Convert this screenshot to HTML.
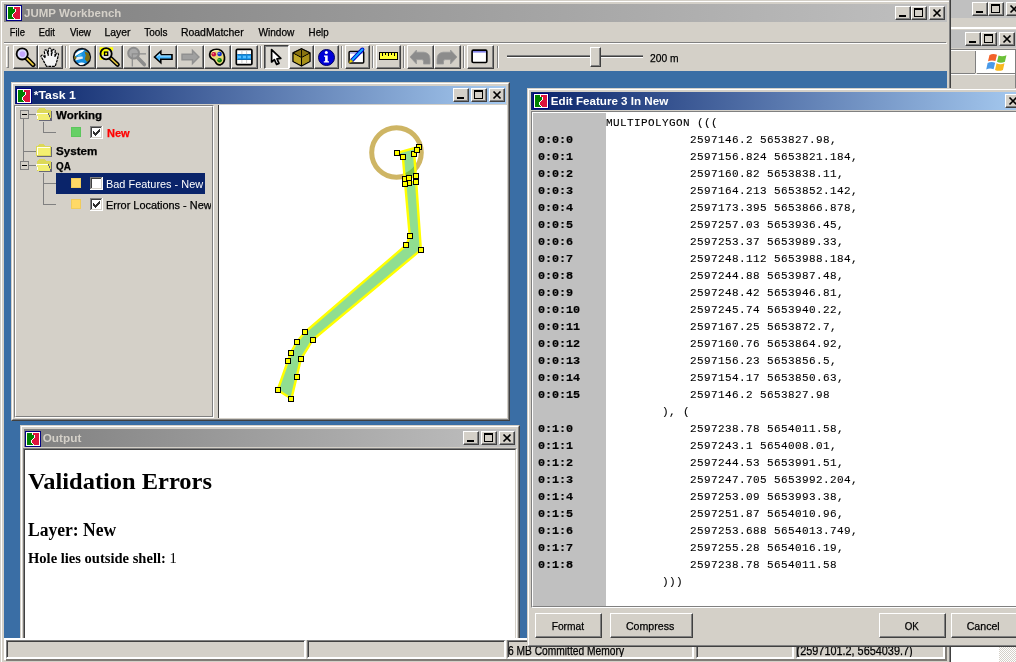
<!DOCTYPE html>
<html>
<head>
<meta charset="utf-8">
<title>JUMP Workbench</title>
<style>
*{box-sizing:border-box;margin:0;padding:0}
html,body{width:1016px;height:662px;overflow:hidden;background:#d4d0c8}
body{position:relative;font-family:"Liberation Sans",sans-serif;font-size:11px;color:#000}
.abs{position:absolute}
.face{background:#d4d0c8}
/* window frames */
.win{position:absolute;background:#d4d0c8;border:1px solid;border-color:#d4d0c8 #404040 #404040 #d4d0c8}
.win>.in{position:absolute;left:0;top:0;right:0;bottom:0;border:1px solid;border-color:#fff #808080 #808080 #fff}
.tb{position:absolute;height:18px;color:#fff;font-weight:bold;font-size:11px;line-height:18px;white-space:nowrap;overflow:hidden}
.tb.act{background:linear-gradient(90deg,#0a246a 0%,#a6caf0 100%)}
.tb.ina{background:linear-gradient(90deg,#808080 0%,#c0c0c0 100%);color:#d4d0c8}
.cb{position:absolute;width:16px;height:14px;background:#d4d0c8;border:1px solid;border-color:#fff #404040 #404040 #fff;box-shadow:inset -1px -1px 0 #808080}
.cb svg{position:absolute;left:0;top:0}
.ico{position:absolute;width:16px;height:16px}
/* toolbar */
.tbtn{position:absolute;top:45px;height:24px;background:#d4d0c8;border:1px solid;border-color:#fff #404040 #404040 #fff;box-shadow:inset -1px -1px 0 #808080}
.tbtn.dn{border-color:#404040 #fff #fff #404040;box-shadow:inset 1px 1px 0 #808080;background:#dcd9d2}
.tsep{position:absolute;top:46px;width:2px;height:22px;border-left:1px solid #808080;border-right:1px solid #fff}
.tbtn svg{position:absolute;left:0;top:0}
.menu span{position:absolute;top:25px;font-size:11px;line-height:14px;white-space:nowrap}
.btn{position:absolute;height:27px;background:#d4d0c8;border:1px solid;border-color:#fff #404040 #404040 #fff;box-shadow:inset -1px -1px 0 #808080;text-align:center;font-size:11px;line-height:24px}
.mono{font-family:"Liberation Mono",monospace}
.serif{font-family:"Liberation Serif",serif}
.sunk{border:1px solid;border-color:#808080 #fff #fff #808080}
.sc{top:640px;height:19px;background:#d4d0c8;border:1px solid;border-width:1px 2px 2px 1px;border-color:#808080 #fff #fff #808080;box-shadow:inset 1px 1px 0 #404040;font-size:12px;line-height:17px;white-space:nowrap;overflow:hidden}
.btn{height:25px;line-height:22px}
.tl{font-size:11px;line-height:15px;white-space:nowrap}
#tr5 span,#tr6 span{display:inline-block;transform-origin:0 0;transform:scaleX(.993)}
.menu span,.tl,.btn,.sc,#t_200{-webkit-text-stroke:0.25px currentColor}
#tr5{-webkit-text-stroke:0}
/*CAL*/
#t_main{display:inline-block;transform-origin:0 0;transform:translate(-0.90px,0.00px) scaleX(1.0441)}
#t_task{display:inline-block;transform-origin:0 0;transform:translate(0.70px,0.00px) scaleX(1.1184)}
#t_out{display:inline-block;transform-origin:0 0;transform:translate(-0.30px,0.00px) scaleX(1.0722)}
#t_dlg{display:inline-block;transform-origin:0 0;transform:translate(-0.20px,0.00px) scaleX(1.0554)}
#m_file{display:inline-block;transform-origin:0 0;transform:translate(-0.30px,0.00px) scaleX(0.8556)}
#m_edit{display:inline-block;transform-origin:0 0;transform:translate(-0.20px,0.00px) scaleX(0.8450)}
#m_view{display:inline-block;transform-origin:0 0;transform:translate(-0.10px,0.00px) scaleX(0.8875)}
#m_layer{display:inline-block;transform-origin:0 0;transform:translate(0.60px,0.00px) scaleX(0.9393)}
#m_tools{display:inline-block;transform-origin:0 0;transform:translate(0.20px,0.00px) scaleX(0.9077)}
#m_road{display:inline-block;transform-origin:0 0;transform:translate(0.90px,0.00px) scaleX(0.9500)}
#m_win{display:inline-block;transform-origin:0 0;transform:translate(0.40px,0.00px) scaleX(0.9200)}
#m_help{display:inline-block;transform-origin:0 0;transform:translate(0.60px,0.00px) scaleX(0.8870)}
#tr1{display:inline-block;transform-origin:0 0;transform:translate(0.10px,0.00px) scaleX(1.0477)}
#tr2{display:inline-block;transform-origin:0 0;transform:translate(-0.10px,0.00px) scaleX(1.0043)}
#tr3{display:inline-block;transform-origin:0 0;transform:translate(0.00px,0.00px) scaleX(1.0564)}
#tr4{display:inline-block;transform-origin:0 0;transform:translate(0.00px,0.00px) scaleX(0.8941)}
#o_h1{display:inline-block;transform-origin:0 0;transform:translate(-0.10px,0.00px) scaleX(1.0183)}
#o_h2{display:inline-block;transform-origin:0 0;transform:translate(0.00px,0.00px) scaleX(0.9747)}
#o_p{display:inline-block;transform-origin:0 0;transform:translate(0.00px,-1.00px) scaleX(1.0034)}
#sp_fmt{display:inline-block;transform-origin:0 0;transform:translate(0.69px,1.00px) scaleX(0.9286)}
#sp_cmp{display:inline-block;transform-origin:0 0;transform:translate(-0.08px,1.00px) scaleX(0.9640)}
#sp_ok{display:inline-block;transform-origin:0 0;transform:translate(-0.35px,1.00px) scaleX(0.8875)}
#sp_can{display:inline-block;transform-origin:0 0;transform:translate(-0.28px,1.00px) scaleX(0.9618)}
#t_200{display:inline-block;transform-origin:0 0;transform:translate(0.00px,1.00px) scaleX(0.9333)}
#s_mem{display:inline-block;transform-origin:0 0;transform:translate(-1.10px,0.00px) scaleX(0.8537)}
#s_xy{display:inline-block;transform-origin:0 0;transform:translate(-1.40px,0.00px) scaleX(0.9055)}
/*ENDCAL*/
</style>
</head>
<body>
<div id="root" style="position:absolute;left:0;top:0;width:1016px;height:662px;will-change:transform">

<!-- ================= MAIN WINDOW ================= -->
<div class="abs" id="main" style="left:0;top:0;width:951px;height:662px;background:#d4d0c8"></div>
<div class="abs" style="left:1px;top:1px;width:948px;height:1px;background:#fff"></div>
<div class="abs" style="left:1px;top:1px;width:1px;height:661px;background:#fff"></div>
<div class="abs" style="left:949px;top:0;width:1px;height:662px;background:#808080"></div>
<div class="abs" style="left:950px;top:0;width:1px;height:662px;background:#404040"></div>

<!-- main title bar -->
<div class="tb ina" style="left:4px;top:4px;width:943px"></div>
<div class="abs" id="t_main" style="left:25px;top:4px;font-weight:bold;font-size:11px;line-height:18px;color:#d4d0c8;white-space:nowrap">JUMP Workbench</div>

<!-- menu -->
<div class="menu" id="menu">
<span style="left:10px" id="m_file">File</span>
<span style="left:39px" id="m_edit">Edit</span>
<span style="left:70px" id="m_view">View</span>
<span style="left:104px" id="m_layer">Layer</span>
<span style="left:144px" id="m_tools">Tools</span>
<span style="left:180px" id="m_road">RoadMatcher</span>
<span style="left:258px" id="m_win">Window</span>
<span style="left:308px" id="m_help">Help</span>
</div>

<!-- toolbar top etched line -->
<div class="abs" style="left:4px;top:42px;width:942px;height:1px;background:#808080"></div>
<div class="abs" style="left:4px;top:43px;width:943px;height:1px;background:#fff"></div>

<!-- toolbar -->
<div class="abs" style="left:6px;top:46px;width:3px;height:22px;border:1px solid;border-color:#fff #808080 #808080 #fff"></div>
<div class="tbtn" style="left:13px;width:25px"><svg width="23" height="22" viewBox="0.3 0.6 23 22">
 <line x1="12.5" y1="12.5" x2="19.5" y2="19.5" stroke="#000" stroke-width="4.6" stroke-linecap="round"/>
 <line x1="13" y1="13" x2="19.3" y2="19.3" stroke="#e8c840" stroke-width="1.8" stroke-linecap="round"/>
 <circle cx="8.5" cy="8.5" r="5.6" fill="#dcdcff" stroke="#000" stroke-width="1.8"/>
 <circle cx="8.7" cy="8.7" r="2.8" fill="#c4a8ff"/>
</svg></div>
<div class="tbtn" style="left:38px;width:25px"><svg width="23" height="22" viewBox="1.2 1 21 20">
 <path d="M8 19.5 L4.5 13 L3 10.5 Q3.2 8.8 5 9.6 L7 12 L6 5.5 Q6.8 3.6 8.4 5 L9.6 9.5 L9.8 3.6 Q11 2 12.4 3.6 L12.6 9.5 L13.6 4.6 Q15 3.2 16 5 L15.8 10.5 L17.2 7.6 Q18.8 6.8 19 8.8 L17.6 14.5 L16 19.5 Z" fill="#f4f4f4" stroke="#000" stroke-width="1.1" stroke-linejoin="round" stroke-dasharray="2.6 0.7"/>
</svg></div>
<div class="tsep" style="left:65px"></div>
<div class="tbtn" style="left:69px;width:27px"><svg width="25" height="22" viewBox="0.500 0 25 22">
 <circle cx="12.500" cy="11" r="8.300" fill="#1890e0" stroke="#0c1018" stroke-width="1.700"/>
 <path d="M6 7.500 Q8.500 4.500 12 4 L15 3.800 Q13.500 6.500 10 7.500 Q7.500 9 5.200 10.500Z" fill="#fff"/>
 <path d="M5.500 12 Q9 10.200 13 10.600 L13.500 12.600 Q9.500 13.800 6 14.400 Z" fill="#e8eef4"/>
 <path d="M8.500 9 L12 8.300 L12 9.300 L9 10Z" fill="#50d8e8"/>
 <path d="M8.500 17.200 Q12 15.600 15.500 17.200 Q13.500 19.400 10.500 19Z" fill="#fff"/>
 <path d="M15 5.500 L19 7 Q21 10.500 20 14 L17.500 16 L15.300 13 L16.300 9.500 Z" fill="#7c6c10"/>
 <path d="M4.800 9.800 L7 11 L6.400 13.800 L4.500 12.600Z" fill="#7c6c10"/>
</svg></div>
<div class="tbtn" style="left:96px;width:27px"><svg width="25" height="22" viewBox="-0.600 0.800 25 22">
 <path d="M2 2 L7.500 2 L2 7.500Z M15.500 2 L10.500 2 L15.500 6Z M2 14.500 L2 9.500 L6 14.500Z" fill="#ffff00"/>
 <line x1="12.5" y1="12.5" x2="20" y2="19.500" stroke="#000" stroke-width="4.400" stroke-linecap="round"/>
 <line x1="13.500" y1="13.500" x2="19.800" y2="19.300" stroke="#e8c840" stroke-width="1.600" stroke-linecap="round"/>
 <circle cx="8.500" cy="8.500" r="5.600" fill="#e4e2dc"/>
 <path d="M3.500 11 A5.600 5.600 0 0 1 12.500 4.400 Z" fill="#ffff00"/>
 <circle cx="8.500" cy="8.500" r="5.600" fill="none" stroke="#000" stroke-width="1.800"/>
 <rect x="6.900" y="6.900" width="3.200" height="3.200" fill="#ffff00" stroke="#000" stroke-width="1.300"/>
</svg></div>
<div class="tbtn" style="left:123px;width:27px"><svg width="25" height="22" viewBox="0 0 25 22">
 <line x1="13.5" y1="11.5" x2="20.3" y2="18.6" stroke="#8c8c8c" stroke-width="3.6" stroke-linecap="round"/>
 <circle cx="9.600" cy="7.200" r="5.400" fill="#a8a8a8" stroke="#8c8c8c" stroke-width="2"/>
 <path d="M8.300 20.500 V7.800 H22" fill="none" stroke="#8c8c8c" stroke-width="1.200"/>
</svg></div>
<div class="tbtn" style="left:150px;width:27px"><svg width="24" height="22" viewBox="0 0 24 22">
 <path d="M3.500 11 L9.800 5.200 V8.800 H21 V13.200 H9.800 V16.800 Z" fill="#48b8ff" stroke="#000" stroke-width="1.6" stroke-linejoin="miter"/>
 <path d="M6 10.500 L9 8 V10 H20" fill="none" stroke="#b0e4ff" stroke-width="1"/>
</svg></div>
<div class="tbtn" style="left:177px;width:27px"><svg width="24" height="22" viewBox="0 0 24 22">
 <path d="M21 11 L14.5 4.5 V8.3 H4 V13.7 H14.5 V17.5 Z" fill="#a0a0a0" stroke="#909090" stroke-width="1.4" stroke-linejoin="miter"/>
</svg></div>
<div class="tbtn" style="left:204px;width:27px"><svg width="24" height="22" viewBox="0 0 24 22">
 <path d="M5.5 5.5 Q9 2.5 14 3.5 Q19 5.5 19.5 11 Q20 17 15.5 18.8 Q12 19.5 10.5 16 Q9.5 13.5 6.5 12.5 Q3.5 10 5.5 5.5Z" fill="#e8d878" stroke="#000" stroke-width="1.7"/>
 <path d="M7 6 Q10 4.2 13.5 4.8" fill="none" stroke="#fff8c0" stroke-width="1"/>
 <circle cx="8.8" cy="8.3" r="2.3" fill="#d01040"/><circle cx="8.2" cy="7.7" r="0.8" fill="#ff90a0"/>
 <circle cx="14.6" cy="8" r="2.3" fill="#1030d0"/><circle cx="14" cy="7.4" r="0.8" fill="#90a0ff"/>
 <circle cx="14.6" cy="14.3" r="2.3" fill="#108010"/><circle cx="14" cy="13.7" r="0.8" fill="#70d070"/>
</svg></div>
<div class="tbtn" style="left:231px;width:27px"><svg width="24" height="22" viewBox="0 0 24 22">
 <rect x="4.300" y="3.400" width="15.600" height="15.200" rx="1.200" fill="#fff" stroke="#000" stroke-width="1.700"/>
 <rect x="5.200" y="8.300" width="13.800" height="5.400" fill="#1e9cf0"/>
 <rect x="5.200" y="8.200" width="13.800" height="0.900" fill="#0868b0"/><rect x="5.200" y="13.100" width="13.800" height="0.900" fill="#0868b0"/>
 <rect x="6" y="10" width="3" height="2" fill="#58c0ff"/><rect x="11" y="10" width="3" height="2" fill="#58c0ff"/><rect x="15.600" y="10" width="3" height="2" fill="#58c0ff"/>
 <path d="M9.900 4.300V8.200M9.900 14V17.800M14.600 4.300V8.200M14.600 14V17.800" stroke="#c4c4c4" stroke-width="0.900"/>
 <path d="M9.900 9V13.200M14.600 9V13.200" stroke="#1480d0" stroke-width="0.900"/>
</svg></div>
<div class="tsep" style="left:260px"></div>
<div class="tbtn dn" style="left:264px;width:25px"><svg width="23" height="22" viewBox="0 0 23 22">
 <path d="M6.6 3.6 V16 L9.4 13.6 L11.6 18.4 L14 17.4 L12 12.8 L15.8 12.4 Z" fill="#fff" stroke="#000" stroke-width="1.7" stroke-linejoin="round"/>
</svg></div>
<div class="tbtn" style="left:289px;width:25px"><svg width="23" height="22" viewBox="0 0 23 22">
 <path d="M11.5 2.8 L20 7 V15.5 L11.5 20 L3 15.5 V7 Z" fill="#b09820" stroke="#000" stroke-width="1.4" stroke-linejoin="round"/>
 <path d="M3 7 L11.5 11.5 L20 7 L11.5 2.8Z" fill="#8a7410" stroke="#000" stroke-width="1"/>
 <path d="M11.5 11.5 V20" stroke="#000" stroke-width="1.2"/>
 <path d="M11.5 3.5 V11" stroke="#000" stroke-width="0.9"/>
 <path d="M3.8 8.2 L10.8 12 V18.8 L3.8 15Z" fill="#c0a828"/>
 <path d="M19.2 8.2 L12.2 12 V18.8 L19.2 15Z" fill="#a89018"/>
</svg></div>
<div class="tbtn" style="left:314px;width:25px"><svg width="23" height="22" viewBox="0 0 23 22">
 <circle cx="11.5" cy="11.5" r="8" fill="#0000d8" stroke="#000060" stroke-width="1"/>
 <circle cx="11.3" cy="6.6" r="1.5" fill="#fff"/>
 <path d="M9 9.4 H12.7 V15.2 H14 V16.6 H8.8 V15.2 H10.1 V10.8 H9Z" fill="#fff"/>
</svg></div>
<div class="tsep" style="left:341px"></div>
<div class="tbtn" style="left:345px;width:25px"><svg width="23" height="22" viewBox="0.600 1.200 23 22">
 <rect x="3.700" y="6.700" width="14.600" height="11.600" rx="1" fill="#fff" stroke="#000" stroke-width="1.500"/>
 <rect x="4.500" y="7.500" width="13" height="1.400" fill="#a0a0ec"/>
 <line x1="6.500" y1="15.500" x2="17" y2="4.700" stroke="#0000c8" stroke-width="4" stroke-linecap="round"/>
 <line x1="7" y1="15" x2="17" y2="4.700" stroke="#10a8ff" stroke-width="2" stroke-linecap="round"/>
 <path d="M3.600 18.200 L5 14.400 L7.800 16.800Z" fill="#f0e000" stroke="#a08000" stroke-width="0.500"/>
</svg></div>
<div class="tsep" style="left:372px"></div>
<div class="tbtn" style="left:376px;width:25px"><svg width="23" height="22" viewBox="0 0 23 22" shape-rendering="crispEdges">
 <rect x="2" y="6" width="19" height="8" rx="1" fill="#000"/>
 <rect x="3" y="7" width="17" height="6" fill="#ffff30"/>
 <rect x="5" y="7" width="1" height="3" fill="#000"/><rect x="8" y="7" width="1" height="2" fill="#000"/><rect x="11" y="7" width="1" height="3" fill="#000"/><rect x="14" y="7" width="1" height="2" fill="#000"/><rect x="17" y="7" width="1" height="3" fill="#000"/>
</svg></div>
<div class="tsep" style="left:403px"></div>
<div class="tbtn" style="left:407px;width:27px"><svg width="25" height="22" viewBox="0 0 25 22">
 <path d="M2 11 L8.500 4 V6.200 H16 Q22 7 22 13 V18 H15.500 V15 Q15.300 13.600 13.500 13.600 H8.500 V18 Z" fill="#8c8c8c" stroke="#999" stroke-width="0.800" stroke-linejoin="round"/>
</svg></div>
<div class="tbtn" style="left:434px;width:27px"><svg width="25" height="22" viewBox="0 0 25 22">
 <path d="M22 11 L15.500 4 V6.200 H8 Q2 7 2 13 V18 H8.500 V15 Q8.700 13.600 10.500 13.600 H15.500 V18 Z" fill="#8c8c8c" stroke="#999" stroke-width="0.800" stroke-linejoin="round"/>
</svg></div>
<div class="tsep" style="left:463px"></div>
<div class="tbtn" style="left:467px;width:27px"><svg width="25" height="22" viewBox="0 0 25 22">
 <rect x="4.100" y="4.200" width="14.700" height="12.300" rx="1.200" fill="#fff" stroke="#000" stroke-width="1.700"/>
 <rect x="5" y="5" width="12.900" height="1.600" fill="#8080e8"/>
</svg></div>
<div class="tsep" style="left:497px"></div>
<!-- slider -->
<div class="abs" style="left:507px;top:56px;width:136px;height:1px;background:#404040"></div>
<div class="abs" style="left:507px;top:55px;width:136px;height:1px;background:#808080"></div>
<div class="abs" style="left:507px;top:57px;width:136px;height:1px;background:#fff"></div>
<div class="abs" style="left:590px;top:47px;width:11px;height:20px;background:#d4d0c8;border:1px solid;border-color:#fff #404040 #404040 #fff;box-shadow:inset -1px -1px 0 #808080"></div>
<div class="abs" id="t_200" style="left:650px;top:50px;font-size:11px;line-height:14px;white-space:nowrap">200 m</div>

<!-- desktop -->
<div class="abs" id="desk" style="left:4px;top:71px;width:943px;height:567px;background:#3a6ea5"></div>


<!-- main title icon + buttons -->
<svg class="abs" style="left:6px;top:5px" width="16" height="16" viewBox="0 0 16 16" shape-rendering="crispEdges"><use href="#jico"/></svg>
<div class="cb" style="left:895px;top:6px"><svg width="14" height="12"><use href="#gmin"/></svg></div>
<div class="cb" style="left:911px;top:6px"><svg width="14" height="12"><use href="#gmax"/></svg></div>
<div class="cb" style="left:929px;top:6px"><svg width="14" height="12"><use href="#gcls"/></svg></div>

<!-- ================= TASK FRAME ================= -->
<div class="win" id="task" style="left:11px;top:82px;width:499px;height:339px"><div class="in"></div></div>
<div class="tb act" style="left:15px;top:86px;width:491px"></div>
<svg class="abs" style="left:16px;top:88px" width="16" height="16" viewBox="0 0 16 16" shape-rendering="crispEdges"><use href="#jico"/></svg>
<div class="abs" id="t_task" style="left:33px;top:86px;font-weight:bold;font-size:11px;line-height:18px;color:#fff;white-space:nowrap">*Task 1</div>
<div class="cb" style="left:453px;top:88px"><svg width="14" height="12"><use href="#gmin"/></svg></div>
<div class="cb" style="left:471px;top:88px"><svg width="14" height="12"><use href="#gmax"/></svg></div>
<div class="cb" style="left:489px;top:88px"><svg width="14" height="12"><use href="#gcls"/></svg></div>

<!-- tree panel -->
<div class="abs" style="left:14px;top:105px;width:200px;height:313px;background:#d4d0c8;border:1px solid;border-color:#808080 #fff #fff #808080"></div>
<div class="abs" style="left:15px;top:106px;width:198px;height:311px;border:1px solid;border-color:#fff #808080 #808080 #fff"></div>
<!-- splitter dark line + map -->
<div class="abs" style="left:218px;top:105px;width:1px;height:313px;background:#404040"></div>
<div class="abs" id="map" style="left:219px;top:105px;width:288px;height:313px;background:#fff"></div>

<!-- tree content -->
<svg class="abs" style="left:16px;top:107px" width="196" height="120" viewBox="16 107 196 120" shape-rendering="crispEdges">
 <g stroke="#808080" stroke-width="1" fill="none">
  <path d="M23.5 119 V161 M29 114.5 H36 M23.5 151.5 H36 M29 165.5 H36"/>
  <path d="M43.5 122 V132.500 H56 M43.5 173 V204.500 H56 M43.5 183.500 H56"/>
  <rect x="20.500" y="110.500" width="8" height="8" fill="#d4d0c8"/>
  <rect x="20.500" y="161.500" width="8" height="8" fill="#d4d0c8"/>
 </g>
 <rect x="22" y="114" width="5" height="1" fill="#000"/>
 <rect x="22" y="165" width="5" height="1" fill="#000"/>
 <rect x="56" y="173" width="149" height="21" fill="#0a246a"/>
 <rect x="71" y="127" width="10" height="10" fill="#66d066"/><rect x="71.500" y="127.500" width="9" height="9" fill="none" stroke="#5cc65c"/>
 <rect x="71" y="178" width="10" height="10" fill="#ffd966"/><rect x="71.500" y="178.500" width="9" height="9" fill="none" stroke="#f0cc5c"/>
 <rect x="71" y="199" width="10" height="10" fill="#ffd966"/><rect x="71.500" y="199.500" width="9" height="9" fill="none" stroke="#f0cc5c"/>
 <use href="#chk" x="90" y="126"/><use href="#tick" x="90" y="126"/>
 <use href="#chk" x="90" y="177"/>
 <use href="#chk" x="90" y="198"/><use href="#tick" x="90" y="198"/>
 <use href="#fopen" x="36" y="108"/>
 <use href="#fclosed" x="36" y="144"/>
 <use href="#fopen" x="36" y="159"/>
</svg>
<div class="abs tl" id="tr1" style="left:56px;top:108px;font-weight:bold">Working</div>
<div class="abs tl" id="tr2" style="left:107px;top:126px;font-weight:bold;color:#ff0000">New</div>
<div class="abs tl" id="tr3" style="left:56px;top:144px;font-weight:bold">System</div>
<div class="abs tl" id="tr4" style="left:56px;top:159px;font-weight:bold">QA</div>
<div class="abs tl" id="tr5" style="left:106.300px;top:177px;color:#fff;width:98px;overflow:hidden"><span>Bad Features - New</span></div>
<div class="abs tl" id="tr6" style="left:106.300px;top:198px;width:105px;overflow:hidden"><span>Error Locations - New</span></div>

<!-- map content -->
<svg class="abs" style="left:219px;top:105px" width="288" height="313" viewBox="0 0 288 313">
 <circle cx="177.500" cy="47.500" r="24.8" fill="none" stroke="#ceb564" stroke-width="5"/>
 <path d="M58.70 285.00 L72.43 293.78 L77.59 271.91 L81.97 253.78 L93.84 234.74 L201.89 144.86 L197.16 76.54 L190.37 78.02 L186.19 78.93 L190.77 131.47 L187.31 139.99 L85.90 227.22 L77.51 237.27 L71.66 248.15 L69.00 255.74Z M178.31 47.79 L183.89 52.40 L185.74 73.72 L189.84 72.82 L196.80 71.30 L195.23 48.59 L197.57 44.99 L199.63 41.83Z" fill="#42c742" fill-opacity="0.588" stroke="none" fill-rule="evenodd"/>
 <path d="M58.70 285.00 L72.43 293.78 L77.59 271.91 L81.97 253.78 L93.84 234.74 L201.89 144.86 L197.16 76.54 L190.37 78.02 L186.19 78.93 L190.77 131.47 L187.31 139.99 L85.90 227.22 L77.51 237.27 L71.66 248.15 L69.00 255.74Z M178.31 47.79 L183.89 52.40 L185.74 73.72 L189.84 72.82 L196.80 71.30 L195.23 48.59 L197.57 44.99 L199.63 41.83Z" fill="none" stroke="#ffff00" stroke-width="2.4" stroke-linejoin="round"/>
 <g fill="#ffff00" stroke="#000" stroke-width="1" shape-rendering="crispEdges"><rect x="56.5" y="282.5" width="5" height="5"/><rect x="69.5" y="291.5" width="5" height="5"/><rect x="75.5" y="269.5" width="5" height="5"/><rect x="79.5" y="251.5" width="5" height="5"/><rect x="91.5" y="232.5" width="5" height="5"/><rect x="199.5" y="142.5" width="5" height="5"/><rect x="194.5" y="74.5" width="5" height="5"/><rect x="187.5" y="75.5" width="5" height="5"/><rect x="183.5" y="76.5" width="5" height="5"/><rect x="188.5" y="128.5" width="5" height="5"/><rect x="184.5" y="137.5" width="5" height="5"/><rect x="83.5" y="224.5" width="5" height="5"/><rect x="75.5" y="234.5" width="5" height="5"/><rect x="69.5" y="245.5" width="5" height="5"/><rect x="66.5" y="253.5" width="5" height="5"/><rect x="175.5" y="45.5" width="5" height="5"/><rect x="181.5" y="49.5" width="5" height="5"/><rect x="183.5" y="71.5" width="5" height="5"/><rect x="187.5" y="70.5" width="5" height="5"/><rect x="194.5" y="68.5" width="5" height="5"/><rect x="192.5" y="46.5" width="5" height="5"/><rect x="197.5" y="39.5" width="5" height="5"/><rect x="195.5" y="42.5" width="5" height="5"/></g>
</svg>

<!-- ================= OUTPUT FRAME ================= -->
<div class="win" id="outw" style="left:20px;top:425px;width:500px;height:230px"><div class="in"></div></div>
<div class="tb ina" style="left:24px;top:429px;width:492px"></div>
<svg class="abs" style="left:25px;top:431px" width="16" height="16" viewBox="0 0 16 16" shape-rendering="crispEdges"><use href="#jico"/></svg>
<div class="abs" id="t_out" style="left:43px;top:429px;font-weight:bold;font-size:11px;line-height:18px;color:#d4d0c8;white-space:nowrap">Output</div>
<div class="cb" style="left:463px;top:431px"><svg width="14" height="12"><use href="#gmin"/></svg></div>
<div class="cb" style="left:481px;top:431px"><svg width="14" height="12"><use href="#gmax"/></svg></div>
<div class="cb" style="left:499px;top:431px"><svg width="14" height="12"><use href="#gcls"/></svg></div>
<div class="abs" style="left:23px;top:448px;width:494px;height:200px;background:#fff;border:1px solid;border-color:#808080 #fff #fff #808080"></div>
<div class="abs" style="left:24px;top:449px;width:492px;height:200px;background:#fff;border:1px solid;border-color:#404040 #d4d0c8 #d4d0c8 #404040"></div>
<div class="abs serif" id="o_h1" style="left:28px;top:467px;font-size:24px;font-weight:bold;line-height:28px;white-space:nowrap">Validation Errors</div>
<div class="abs serif" id="o_h2" style="left:28px;top:519px;font-size:18px;font-weight:bold;line-height:22px;white-space:nowrap">Layer: New</div>
<div class="abs serif" id="o_p" style="left:28px;top:551px;font-size:14.5px;line-height:16px;white-space:nowrap"><b>Hole lies outside shell:</b> 1</div>

<!-- ================= STATUS BAR (below desktop) ================= -->
<div class="abs" style="left:2px;top:638px;width:947px;height:24px;background:#d4d0c8"></div>
<div class="abs" style="left:4px;top:638px;width:943px;height:2px;background:#fff"></div>
<div class="abs" style="left:4px;top:638px;width:2px;height:22px;background:#fff"></div>
<div class="abs" style="left:6px;top:659px;width:941px;height:2px;background:#807c76"></div>
<div class="abs" style="left:945px;top:640px;width:2px;height:21px;background:#807c76"></div>
<div class="abs sc" style="left:6px;width:300px"></div>
<div class="abs sc" style="left:307px;width:199px"></div>
<div class="abs sc" style="left:507px;width:187px"><span id="s_mem" style="position:absolute;left:1px;top:2px">6 MB Committed Memory</span></div>
<div class="abs sc" style="left:696px;width:98px"></div>
<div class="abs sc" style="left:796px;width:149px"><span id="s_xy" style="position:absolute;left:1px;top:2px">(2597101.2, 5654039.7)</span></div>

<!-- ================= RIGHT BACKGROUND WINDOWS ================= -->
<div class="abs" style="left:951px;top:0;width:65px;height:662px;background:#d4d0c8"></div>
<div class="abs" style="left:951px;top:0;width:65px;height:18px;background:#c0c0c0"></div>
<div class="cb" style="left:972px;top:2px"><svg width="14" height="12"><use href="#gmin"/></svg></div>
<div class="cb" style="left:988px;top:2px"><svg width="14" height="12"><use href="#gmax"/></svg></div>
<div class="cb" style="left:1006px;top:2px"><svg width="14" height="12"><use href="#gcls"/></svg></div>
<div class="abs" style="left:951px;top:27px;width:65px;height:2px;background:#fff"></div>
<div class="abs" style="left:951px;top:30px;width:65px;height:18px;background:#c0c0c0"></div>
<div class="cb" style="left:965px;top:32px"><svg width="14" height="12"><use href="#gmin"/></svg></div>
<div class="cb" style="left:981px;top:32px"><svg width="14" height="12"><use href="#gmax"/></svg></div>
<div class="cb" style="left:999px;top:32px"><svg width="14" height="12"><use href="#gcls"/></svg></div>
<div class="abs" style="left:951px;top:49px;width:65px;height:1px;background:#808080"></div>
<div class="abs" style="left:951px;top:50px;width:65px;height:1px;background:#fff"></div>
<div class="abs" style="left:975px;top:51px;width:1px;height:22px;background:#808080"></div>
<div class="abs" style="left:976px;top:50px;width:39px;height:23px;background:#fff"></div>
<div class="abs" style="left:951px;top:73px;width:24px;height:1px;background:#808080"></div>
<div class="abs" style="left:977px;top:73px;width:38px;height:1px;background:#808080"></div>
<div class="abs" style="left:951px;top:74px;width:65px;height:1px;background:#fff"></div>
<div class="abs" style="left:1015px;top:50px;width:1px;height:612px;background:#808080"></div>
<svg class="abs" style="left:986px;top:52px" width="22" height="20" viewBox="0 0 20 18">
 <path d="M3.2 2.6 Q6.5 0.8 10 2.4 L8.6 8.2 Q5.2 6.8 1.8 8.4 Z" fill="#f2622a"/>
 <path d="M11.4 3 Q14.6 4.6 18.6 2.8 L17.2 8.8 Q13.4 10.4 10 8.8 Z" fill="#6cc038"/>
 <path d="M1.5 9.8 Q5 8.2 8.3 9.6 L6.9 15.6 Q3.6 14.2 0.2 15.8 Z" fill="#4a9ae8"/>
 <path d="M9.6 10.2 Q13 11.8 16.8 10.2 L15.4 16.2 Q11.8 17.8 8.2 16.2 Z" fill="#f8b820"/>
</svg>
<!-- bottom-right white area under dialog -->
<div class="abs" style="left:951px;top:647px;width:65px;height:15px;background:#fff"></div>
<div class="abs" style="left:999px;top:647px;width:17px;height:15px;background:repeating-conic-gradient(#fff 0 25%,#d4d0c8 0 50%) 0 0/2px 2px"></div>

<!-- ================= EDIT FEATURE DIALOG ================= -->
<div class="win" id="dlg" style="left:527px;top:88px;width:500px;height:559px"><div class="in"></div></div>
<div class="tb act" style="left:531px;top:92px;width:492px"></div>
<svg class="abs" style="left:533px;top:93px" width="16" height="16" viewBox="0 0 16 16" shape-rendering="crispEdges"><use href="#jico"/></svg>
<div class="abs" id="t_dlg" style="left:551px;top:92px;font-weight:bold;font-size:11px;line-height:18px;color:#fff;white-space:nowrap">Edit Feature 3 In New</div>
<div class="cb" style="left:1005px;top:94px"><svg width="14" height="12"><use href="#gcls"/></svg></div>
<!-- editor panel -->
<div class="abs" style="left:531px;top:111px;width:492px;height:497px;background:#fff;border:1px solid;border-color:#808080 #fff #fff #808080"></div>
<div class="abs" style="left:532px;top:112px;width:490px;height:495px;background:#fff;border:1px solid;border-color:#fff #808080 #808080 #fff"></div>
<div class="abs" style="left:533px;top:113px;width:73px;height:493px;background:#c0c0c0"></div>
<pre class="abs mono" id="gut" style="left:538px;top:115px;font-size:11.75px;line-height:17px;font-weight:bold;letter-spacing:-0.050px;-webkit-text-stroke:0.200px #000">&nbsp;
0:0:0
0:0:1
0:0:2
0:0:3
0:0:4
0:0:5
0:0:6
0:0:7
0:0:8
0:0:9
0:0:10
0:0:11
0:0:12
0:0:13
0:0:14
0:0:15

0:1:0
0:1:1
0:1:2
0:1:3
0:1:4
0:1:5
0:1:6
0:1:7
0:1:8
</pre>
<pre class="abs mono" id="wkt" style="left:606px;top:115px;font-size:11px;line-height:17px;letter-spacing:0.400px;-webkit-text-stroke:0.100px #000">MULTIPOLYGON (((
            2597146.2 5653827.98,
            2597156.824 5653821.184,
            2597160.82 5653838.11,
            2597164.213 5653852.142,
            2597173.395 5653866.878,
            2597257.03 5653936.45,
            2597253.37 5653989.33,
            2597248.112 5653988.184,
            2597244.88 5653987.48,
            2597248.42 5653946.81,
            2597245.74 5653940.22,
            2597167.25 5653872.7,
            2597160.76 5653864.92,
            2597156.23 5653856.5,
            2597154.17 5653850.63,
            2597146.2 5653827.98
        ), (
            2597238.78 5654011.58,
            2597243.1 5654008.01,
            2597244.53 5653991.51,
            2597247.705 5653992.204,
            2597253.09 5653993.38,
            2597251.87 5654010.96,
            2597253.688 5654013.749,
            2597255.28 5654016.19,
            2597238.78 5654011.58
        )))</pre>
<!-- buttons -->
<div class="btn" id="b_fmt" style="left:535px;top:613px;width:67px"><span id="sp_fmt">Format</span></div>
<div class="btn" id="b_cmp" style="left:610px;top:613px;width:83px"><span id="sp_cmp">Compress</span></div>
<div class="btn" id="b_ok" style="left:879px;top:613px;width:67px"><span id="sp_ok">OK</span></div>
<div class="btn" id="b_can" style="left:951px;top:613px;width:67px"><span id="sp_can">Cancel</span></div>

<!-- shared symbols -->
<svg width="0" height="0" style="position:absolute">
<defs>
<g id="jico"><rect x="0" y="0" width="16" height="16" fill="#000080"/><rect x="1" y="1" width="14" height="14" fill="#fff"/><rect x="2" y="2" width="5" height="1" fill="#008000"/><rect x="8" y="2" width="6" height="1" fill="#dc143c"/><rect x="2" y="3" width="5" height="1" fill="#008000"/><rect x="8" y="3" width="6" height="1" fill="#dc143c"/><rect x="2" y="4" width="7" height="1" fill="#008000"/><rect x="10" y="4" width="4" height="1" fill="#dc143c"/><rect x="2" y="5" width="7" height="1" fill="#008000"/><rect x="10" y="5" width="4" height="1" fill="#dc143c"/><rect x="2" y="6" width="7" height="1" fill="#008000"/><rect x="10" y="6" width="4" height="1" fill="#dc143c"/><rect x="2" y="7" width="6" height="1" fill="#008000"/><rect x="9" y="7" width="5" height="1" fill="#dc143c"/><rect x="2" y="8" width="5" height="1" fill="#008000"/><rect x="8" y="8" width="6" height="1" fill="#dc143c"/><rect x="2" y="9" width="4" height="1" fill="#008000"/><rect x="7" y="9" width="7" height="1" fill="#dc143c"/><rect x="2" y="10" width="4" height="1" fill="#008000"/><rect x="7" y="10" width="7" height="1" fill="#dc143c"/><rect x="2" y="11" width="4" height="1" fill="#008000"/><rect x="7" y="11" width="7" height="1" fill="#dc143c"/><rect x="2" y="12" width="5" height="1" fill="#008000"/><rect x="8" y="12" width="6" height="1" fill="#dc143c"/><rect x="2" y="13" width="6" height="1" fill="#008000"/><rect x="9" y="13" width="5" height="1" fill="#dc143c"/></g>
<g id="gmin"><rect x="3" y="8" width="7" height="2" fill="#000"/></g>
<g id="gmax"><path d="M2 1h9v9h-9z M3 3v6h7v-6z" fill="#000" fill-rule="evenodd"/></g>
<g id="gcls"><path d="M3.5 2.5 L10.5 9.5 M10.5 2.5 L3.5 9.5" stroke="#000" stroke-width="1.7" fill="none"/></g>
<g id="chk"><rect x="0" y="0" width="13" height="13" fill="#fff"/><path d="M0 0h12v1h-11v11h-1z" fill="#808080"/><path d="M1 1h10v1h-9v9h-1z" fill="#404040"/><path d="M12 0h1v13h-13v-1h12z" fill="#fff"/><path d="M11 1h1v11h-11v-1h10z" fill="#d4d0c8"/></g>
<g id="tick"><rect x="3" y="5" width="1" height="3" fill="#303030"/><rect x="4" y="6" width="1" height="3" fill="#303030"/><rect x="5" y="7" width="1" height="3" fill="#303030"/><rect x="6" y="6" width="1" height="3" fill="#303030"/><rect x="7" y="5" width="1" height="3" fill="#303030"/><rect x="8" y="4" width="1" height="3" fill="#303030"/><rect x="9" y="3" width="1" height="3" fill="#303030"/></g>
<g id="fopen"><path d="M1 3l2-3h5l2 2h5v10h-14z" fill="#dcd858"/><path d="M0 5h12l2 7h-12z" fill="#f2ee72"/><path d="M0 5h12v1h-11l1.500 5h-1z" fill="#fffff4"/><path d="M15 3h1v10h-13v-1h12z" fill="#686878"/><rect x="12" y="5" width="1" height="2" fill="#606078"/><rect x="13" y="7" width="1" height="2" fill="#606078"/><rect x="14" y="10" width="1" height="2" fill="#606078"/></g>
<g id="fclosed"><path d="M1 2l2-2h4l2 2z" fill="#dcd858"/><rect x="0" y="2" width="15" height="10" fill="#dcd858"/><rect x="1" y="3" width="13" height="8" fill="#f4f070"/><path d="M1 3h13v1h-12v7h-1z" fill="#fffff4"/><path d="M15 3h1v10h-15v-1h14z" fill="#686878"/></g>
</defs>
</svg>
</div>
</body>
</html>
